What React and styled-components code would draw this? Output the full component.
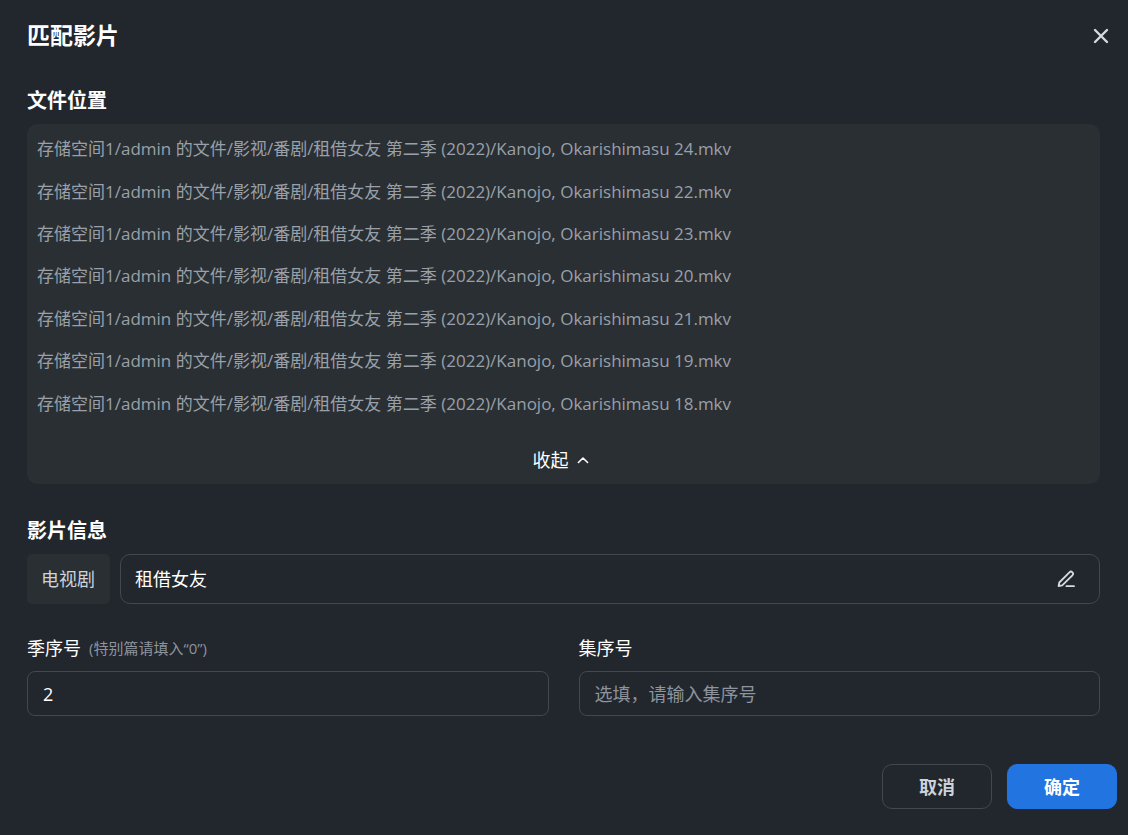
import React, { useId, useState } from "react";
import styled, { createGlobalStyle, css } from "styled-components";

const GlobalStyle = createGlobalStyle`
  *, *::before, *::after { box-sizing: border-box; }
  body {
    margin: 0;
    background: #22262d;
    color: #fff;
    font: 18px/24px "Open Sans", "Noto Sans CJK SC", sans-serif;
  }
  button, input { font: inherit; color: inherit; }
`;

const Dialog = styled.main`
  display: flex;
  flex-direction: column;
  min-height: 100vh;
  padding: 0 28px 26px 27px;
  background: #22262d;
`;

const Header = styled.header`
  display: flex;
  align-items: center;
  justify-content: space-between;
  height: 72px;
`;

const Title = styled.h1`
  margin: 0;
  font-size: 23px;
  line-height: 30px;
  padding-bottom: 2px;
  font-weight: 700;
`;

const IconButton = styled.button`
  display: grid;
  place-items: center;
  padding: 0;
  border: 0;
  background: none;
  color: #d3dae2;
  cursor: pointer;
`;

const CloseButton = styled(IconButton)`
  width: 32px;
  height: 32px;
  margin-right: -17px;
`;

const Section = styled.section`
  padding-top: ${(p) => p.$top}px;
`;

const SectionTitle = styled.h2`
  margin: 0 0 9px;
  font-size: 20px;
  line-height: 28px;
  font-weight: 700;
`;

const FilePanel = styled.div`
  display: flex;
  flex-direction: column;
  align-items: center;
  padding: 4px 10px 8px;
  border-radius: 10px;
  background: #2a2f33;
`;

const FileList = styled.ul`
  display: grid;
  grid-auto-rows: 1fr;
  align-items: center;
  align-self: stretch;
  min-height: 297px;
  margin: 0 0 19px;
  padding: 0;
  list-style: none;
  color: #99a0a9;
  font-size: 17px;
`;

const CollapseButton = styled.button`
  display: flex;
  align-items: center;
  gap: 8px;
  padding: 4px 6px 4px 0;
  border: 0;
  background: none;
  color: #fff;
  cursor: pointer;
`;

const MatchRow = styled.div`
  display: flex;
  gap: 10px;
`;

const TypeTag = styled.span`
  display: grid;
  place-items: center;
  padding: 0 15px 0 14px;
  border-radius: 5px;
  background: #2a2f33;
  color: #ccd3db;
`;

const boxed = css`
  border: 1px solid #434850;
  border-radius: ${(p) => p.$radius || 8}px;
  background: transparent;
`;

const MatchField = styled.div`
  ${boxed}
  display: flex;
  flex: 1;
  align-items: center;
  height: 50px;
  padding: 0 21px 0 14px;
`;

const BareInput = styled.input`
  flex: 1;
  min-width: 0;
  padding: 0;
  border: 0;
  outline: 0;
  background: none;
`;

const EditButton = styled(IconButton)`
  width: 24px;
  height: 24px;
`;

const FieldGrid = styled.div`
  display: grid;
  grid-template-columns: 1fr 1fr;
  gap: 30px;
  padding-top: 32px;
`;

const Field = styled.div`
  display: flex;
  flex-direction: column;
  gap: 11px;
`;

const Label = styled.label`
  display: flex;
  align-items: center;
  gap: 8px;
`;

const Hint = styled.span`
  color: #8d949d;
  font-size: 15px;
`;

const TextInput = styled.input`
  ${boxed}
  width: 100%;
  height: 45px;
  padding: 0 15px;
  outline: 0;
  &::placeholder { color: #8d949d; opacity: 1; }
`;

const Footer = styled.footer`
  display: flex;
  justify-content: flex-end;
  gap: 15px;
  margin: auto -17px 0 0;
`;

const ActionButton = styled.button`
  width: 110px;
  height: 45px;
  padding: 0;
  border: 1px solid ${(p) => (p.$primary ? "#2274e1" : "#434850")};
  border-radius: 10px;
  background: ${(p) => (p.$primary ? "#2274e1" : "transparent")};
  color: ${(p) => (p.$primary ? "#fff" : "#ccd3db")};
  font-weight: 700;
  cursor: pointer;
`;

const Stroke = ({ size, width = 2, children }) => (
  <svg
    width={size}
    height={size}
    viewBox={`0 0 ${size} ${size}`}
    fill="none"
    stroke="currentColor"
    strokeWidth={width}
    strokeLinecap="round"
    strokeLinejoin="round"
    aria-hidden="true"
  >
    {children}
  </svg>
);

const episodes = [24, 22, 23, 20, 21, 19, 18];
const folder = "存储空间1/admin 的文件/影视/番剧/租借女友 第二季 (2022)";

function LabeledField({ label, hint, ...input }) {
  const id = useId();
  return (
    <Field>
      <Label htmlFor={id}>
        {label}
        {hint && <Hint>{hint}</Hint>}
      </Label>
      <TextInput id={id} {...input} />
    </Field>
  );
}

export default function App() {
  const [open, setOpen] = useState(true);
  const files = open ? episodes : episodes.slice(0, 1);
  return (
    <>
      <GlobalStyle />
      <Dialog>
        <Header>
          <Title>匹配影片</Title>
          <CloseButton type="button" aria-label="关闭">
            <Stroke size={16} width={2.4}>
              <path d="M2 2 14 14M14 2 2 14" />
            </Stroke>
          </CloseButton>
        </Header>

        <Section $top={15}>
          <SectionTitle>文件位置</SectionTitle>
          <FilePanel>
            <FileList>
              {files.map((n) => (
                <li key={n}>{`${folder}/Kanojo, Okarishimasu ${n}.mkv`}</li>
              ))}
            </FileList>
            <CollapseButton type="button" aria-expanded={open} onClick={() => setOpen(!open)}>
              收起
              <Stroke size={12} width={1.6}>
                <path d="M1.4 8.5 6 4 10.6 8.5" />
              </Stroke>
            </CollapseButton>
          </FilePanel>
        </Section>

        <Section $top={33}>
          <SectionTitle>影片信息</SectionTitle>
          <MatchRow>
            <TypeTag>电视剧</TypeTag>
            <MatchField $radius={10}>
              <BareInput aria-label="影片名称" defaultValue="租借女友" />
              <EditButton type="button" aria-label="编辑">
                <Stroke size={18} width={1.8}>
                  <path d="M1.6 16 2.3 12.5 12.4 2.3a2.1 2.1 0 0 1 3 3L5.2 15.4ZM9.4 16.2H17" />
                </Stroke>
              </EditButton>
            </MatchField>
          </MatchRow>
          <FieldGrid>
            <LabeledField label="季序号" hint="(特别篇请填入“0”)" defaultValue="2" />
            <LabeledField label="集序号" placeholder="选填，请输入集序号" />
          </FieldGrid>
        </Section>

        <Footer>
          <ActionButton type="button">取消</ActionButton>
          <ActionButton type="button" $primary>确定</ActionButton>
        </Footer>
      </Dialog>
    </>
  );
}
